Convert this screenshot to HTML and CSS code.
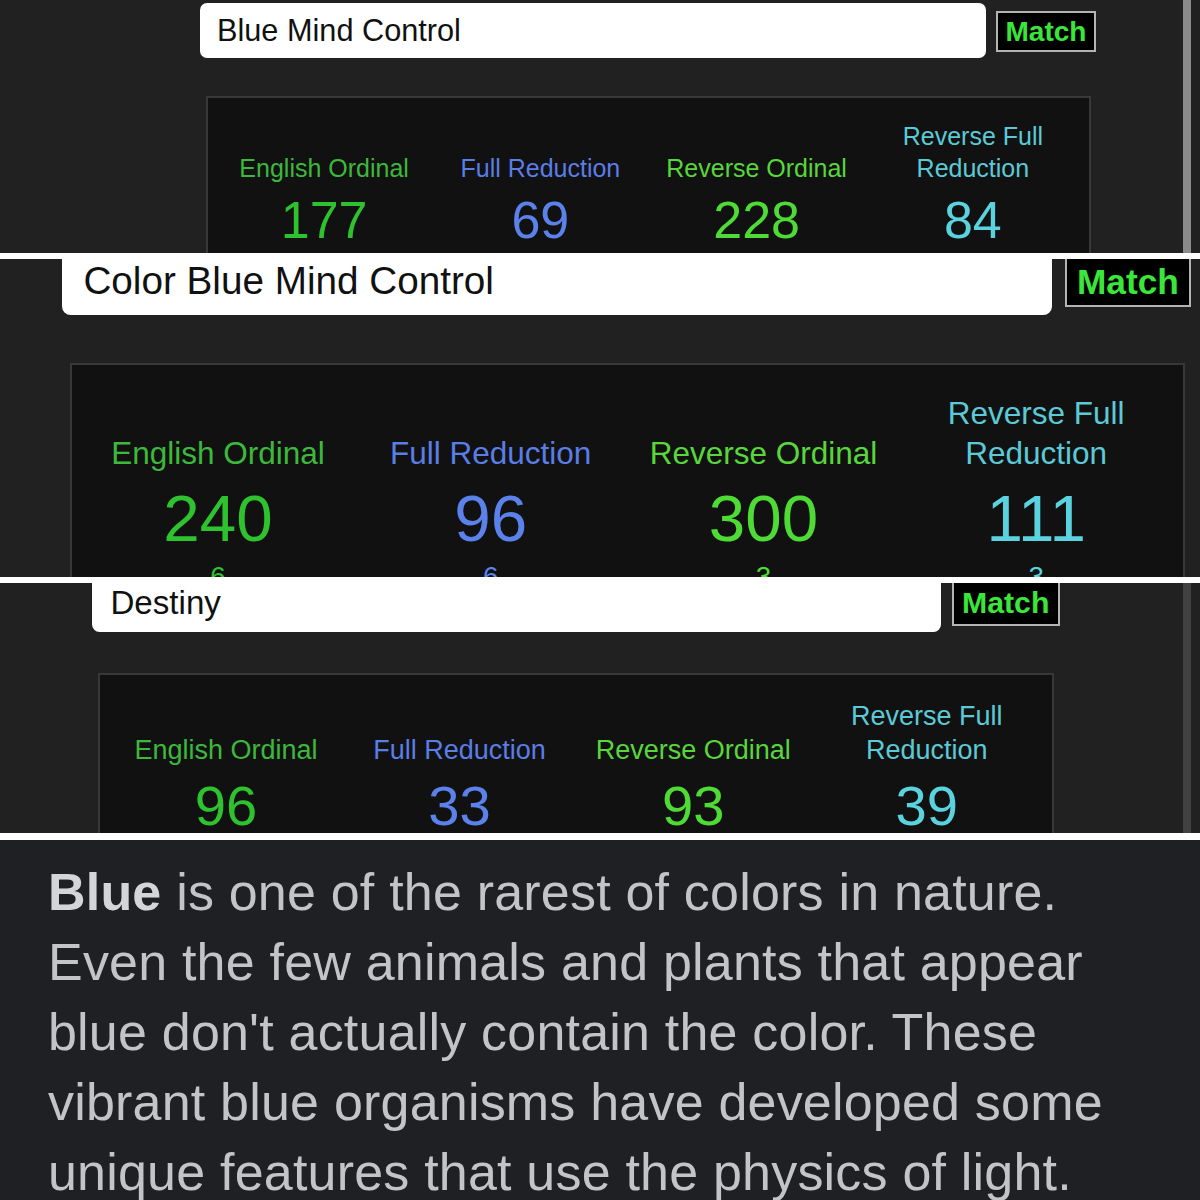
FILE: index.html
```html
<!DOCTYPE html>
<html lang="en">
    <head>
        <meta charset="UTF-8" />
        <title>Gematria matches</title>
        <link rel="stylesheet" href="styles.css">
    </head>
    <body>
        <!-- first lookup, normal zoom -->
        <section class="shot shot-1">
            <div class="calc">
                <div class="search">
                    <div class="phrase">Blue Mind Control</div>
                    <button class="match">Match</button>
                </div>
                <div class="results">
                    <div class="cipher eo"><span class="name">English Ordinal</span><span class="total">177</span></div>
                    <div class="cipher fr"><span class="name">Full Reduction</span><span class="total">69</span></div>
                    <div class="cipher ro"><span class="name">Reverse Ordinal</span><span class="total">228</span></div>
                    <div class="cipher rfr"><span class="name">Reverse Full Reduction</span><span class="total">84</span></div>
                </div>
            </div>
            <div class="scrollbar"></div>
        </section>

        <!-- second lookup, zoomed in -->
        <section class="shot shot-2">
            <div class="calc">
                <div class="search">
                    <div class="phrase">Color Blue Mind Control</div>
                    <button class="match">Match</button>
                </div>
                <div class="results">
                    <div class="cipher eo"><span class="name">English Ordinal</span><span class="total">240</span><span class="reduced">6</span></div>
                    <div class="cipher fr"><span class="name">Full Reduction</span><span class="total">96</span><span class="reduced">6</span></div>
                    <div class="cipher ro"><span class="name">Reverse Ordinal</span><span class="total">300</span><span class="reduced">3</span></div>
                    <div class="cipher rfr"><span class="name">Reverse Full Reduction</span><span class="total">111</span><span class="reduced">3</span></div>
                </div>
            </div>
        </section>

        <!-- third lookup -->
        <section class="shot shot-3">
            <div class="calc">
                <div class="search">
                    <div class="phrase">Destiny</div>
                    <button class="match">Match</button>
                </div>
                <div class="results">
                    <div class="cipher eo"><span class="name">English Ordinal</span><span class="total">96</span></div>
                    <div class="cipher fr"><span class="name">Full Reduction</span><span class="total">33</span></div>
                    <div class="cipher ro"><span class="name">Reverse Ordinal</span><span class="total">93</span></div>
                    <div class="cipher rfr"><span class="name">Reverse Full Reduction</span><span class="total">39</span></div>
                </div>
            </div>
            <div class="scrollbar dim"></div>
        </section>

        <!-- quote -->
        <section class="shot quote">
            <p><b>Blue</b> is one of the rarest of colors in nature.<br>
            Even the few animals and plants that appear<br>
            blue don't actually contain the color. These<br>
            vibrant blue organisms have developed some<br>
            unique features that use the physics of light.</p>
        </section>
    </body>
</html>
```

FILE: styles.css
```css
body {
    margin: 0;
    background: #fff;
    font-family: "Liberation Sans", Arial, sans-serif;
}

.shot {
    position: relative;
    overflow: hidden;
    background: #212121;
}
.shot-1 {
    height: 253px;
    margin-bottom: 6px;
}
.shot-2 {
    height: 318px;
    margin-bottom: 6px;
}
.shot-3 {
    height: 250px;
    margin-bottom: 7px;
}

/* calculator page, each shot shows it at a different zoom */
.calc {
    width: 900px;
}
.shot-1 .calc {
    margin: 3px 0 0 200px;
}
.shot-2 .calc {
    zoom: 1.26;
    margin: -10.6px 0 0 49.2px;
}
.shot-3 .calc {
    zoom: 1.08;
    margin: -9.6px 0 0 85.2px;
}

.search {
    display: flex;
    align-items: center;
    gap: 10px;
}
.phrase {
    width: 786px;
    height: 55px;
    box-sizing: border-box;
    padding-left: 17px;
    background: #fff;
    border-radius: 7px;
    color: #111;
    font-size: 30.7px;
    line-height: 55px;
    white-space: nowrap;
}
.match {
    width: 100px;
    height: 41px;
    box-sizing: border-box;
    padding: 0;
    margin-top: 2px;
    border: 2px solid #b4b4b4;
    background: #000;
    color: #3be63b;
    font: bold 28px/1 "Liberation Sans", Arial, sans-serif;
}

.results {
    width: 885px;
    box-sizing: border-box;
    margin: 38px 0 0 6px;
    padding: 22px 8px 30px;
    border: 2px solid #383838;
    background: #111;
    display: grid;
    grid-template-columns: repeat(4, 1fr);
}
.cipher {
    display: flex;
    flex-direction: column;
    align-items: center;
    text-align: center;
}
.name {
    min-height: 64px;
    display: flex;
    align-items: flex-end;
    font-size: 25px;
    line-height: 32px;
}
.total {
    margin-top: 6px;
    font-size: 52px;
    line-height: 60px;
}
.reduced {
    margin-top: 4px;
    font-size: 22px;
    line-height: 26px;
}

.eo .name { color: #3db83d; }
.eo .total, .eo .reduced { color: #2fc22f; }
.fr .name { color: #5b7de6; }
.fr .total, .fr .reduced { color: #5b82ea; }
.ro .name { color: #58d63c; }
.ro .total, .ro .reduced { color: #4fdb35; }
.rfr .name { color: #5ccad6; }
.rfr .total, .rfr .reduced { color: #5ad3df; }

/* scrollbar overlay on the right edge */
.scrollbar {
    position: absolute;
    top: 0;
    bottom: 0;
    right: 9px;
    width: 8px;
    background: #8a8a8a;
}
.scrollbar.dim {
    background: #414141;
}

.quote {
    height: 360px;
    background: #1f2023;
}
.quote p {
    margin: 0;
    padding: 17px 0 0 48px;
    color: #c3c4c8;
    font-size: 52px;
    line-height: 70px;
    letter-spacing: 0.2px;
    white-space: nowrap;
}
.quote b {
    color: #d4d5d9;
}
```
